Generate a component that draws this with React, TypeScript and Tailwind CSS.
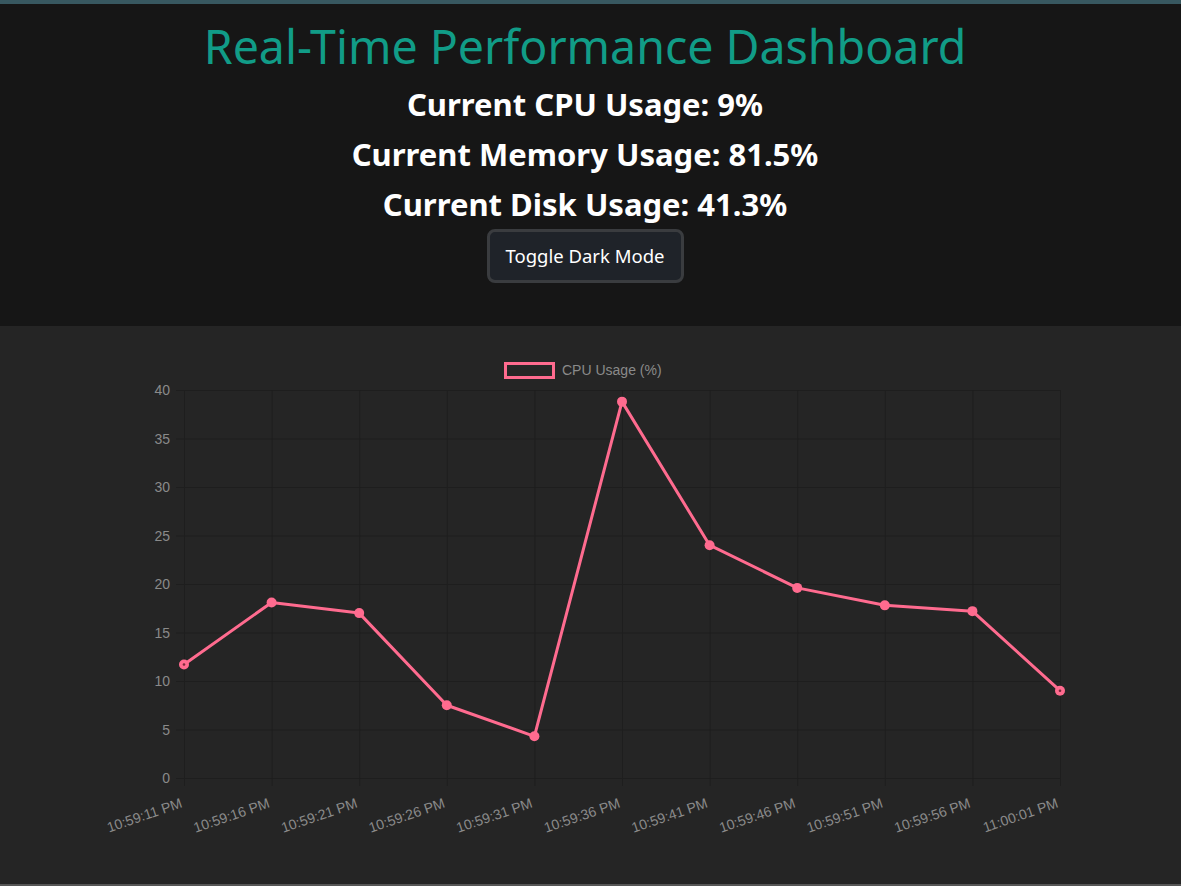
import React from "react";

const labels = [
  "10:59:11 PM",
  "10:59:16 PM",
  "10:59:21 PM",
  "10:59:26 PM",
  "10:59:31 PM",
  "10:59:36 PM",
  "10:59:41 PM",
  "10:59:46 PM",
  "10:59:51 PM",
  "10:59:56 PM",
  "11:00:01 PM",
];
const cpu = [11.7, 18.1, 17.0, 7.5, 4.3, 38.8, 24.0, 19.6, 17.8, 17.2, 9.0];

// chart area in svg coords
const left = 184;
const right = 1060;
const top = 64;
const bottom = 452;
const maxY = 40;

const xAt = (i: number) => left + ((right - left) * i) / (labels.length - 1);
const yAt = (v: number) => bottom - ((bottom - top) * v) / maxY;

function CpuChart() {
  const ticks = [0, 5, 10, 15, 20, 25, 30, 35, 40];
  const points = cpu.map((v, i) => `${xAt(i)},${yAt(v)}`).join(" ");
  return (
    <svg width="1181" height="558" viewBox="0 0 1181 558" className="block">
      <g fontFamily="'Liberation Sans', Arial, sans-serif" fontSize="14" fill="#8a8a8a">
        {/* legend */}
        <rect x="505.5" y="37.5" width="48" height="14" fill="#262626" stroke="#ff6b8f" strokeWidth="3" />
        <text x="562" y="49">CPU Usage (%)</text>

        {/* grid */}
        {ticks.map((t) => (
          <line key={t} x1={left - 8} x2={right} y1={yAt(t) + 0.5} y2={yAt(t) + 0.5} stroke="#1e1e1e" strokeWidth="1" />
        ))}
        {labels.map((_, i) => (
          <line key={i} x1={xAt(i) + 0.5} x2={xAt(i) + 0.5} y1={top} y2={bottom + 8} stroke="#1e1e1e" strokeWidth="1" />
        ))}

        {/* y ticks */}
        {ticks.map((t) => (
          <text key={t} x={170} y={yAt(t) + 5} textAnchor="end">
            {t}
          </text>
        ))}

        {/* x ticks */}
        {labels.map((l, i) => (
          <text key={l} textAnchor="end" transform={`translate(${xAt(i) - 1}, 481) rotate(-19)`}>
            {l}
          </text>
        ))}
      </g>

      <polyline points={points} fill="none" stroke="#ff6b8f" strokeWidth="3" strokeLinejoin="round" />
      {cpu.map((v, i) => (
        <g key={i}>
          <circle cx={xAt(i)} cy={yAt(v)} r="5" fill="#ff6b8f" />
          {(i === 0 || i === cpu.length - 1) && <circle cx={xAt(i)} cy={yAt(v)} r="1.3" fill="#7a2a3a" />}
        </g>
      ))}
    </svg>
  );
}

export default function App() {
  return (
    <div className="min-h-[886px] bg-[#252525] font-['Noto_Sans',sans-serif]">
      <div className="h-[4px] bg-[#385860]" />
      <header className="flex h-[322px] flex-col items-center bg-[#161616] pr-[11px] pt-[14px]">
        <h1 className="text-[46.5px] leading-[56px] text-[#119c87]">Real-Time Performance Dashboard</h1>
        <h2 className="mt-[5px] text-[31px] font-bold leading-[50px] text-white">Current CPU Usage: 9%</h2>
        <h2 className="text-[31px] font-bold leading-[50px] text-white">Current Memory Usage: 81.5%</h2>
        <h2 className="text-[31px] font-bold leading-[50px] text-white">Current Disk Usage: 41.3%</h2>
        <button className="mt-[0px] h-[54px] w-[197px] rounded-lg border-[3px] border-[#3a3c3f] bg-[#1f2329] text-[18.5px] text-white">
          Toggle Dark Mode
        </button>
      </header>
      <section className="bg-[#252525]">
        <CpuChart />
      </section>
      <div className="h-[2px] bg-[#565656]" />
    </div>
  );
}
